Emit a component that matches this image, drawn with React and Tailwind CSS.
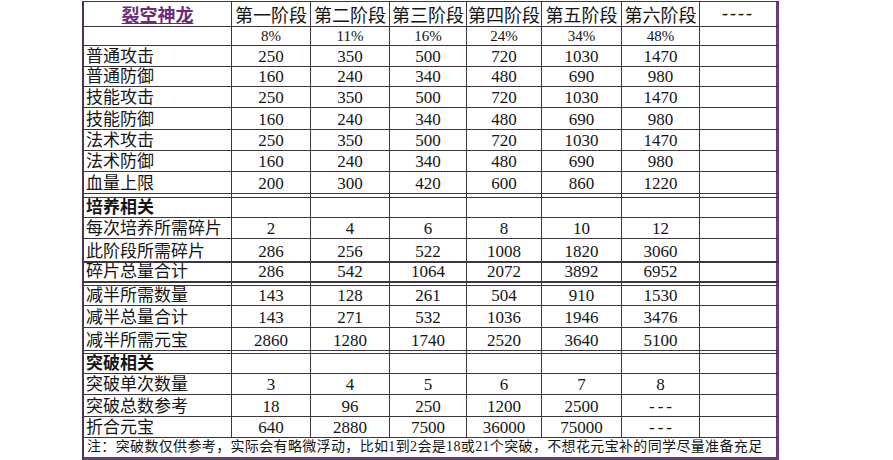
import React from "react";

const W = ["w-[148px]", "w-[79px]", "w-[79px]", "w-[77px]", "w-[75px]", "w-[80px]", "w-[78px]", "w-[79px]"];
const LINE = "border-[#3d3640]";

function Row({ cells, h, bottom = "border-b", kind = "data" }) {
  return (
    <div className={`flex ${h} ${bottom} ${LINE}`}>
      {W.map((w, i) => {
        const last = i === W.length - 1;
        const v = cells ? cells[i] : "";
        let inner = null;
        if (kind === "header" && i === 0) {
          inner = (
            <span className="text-[18px] leading-[20px] font-bold text-[#6b2c7a] underline decoration-[#6b2c7a] underline-offset-[1px]">
              {v}
            </span>
          );
        } else if (kind === "header") {
          inner = (
            <span className={`text-[18px] leading-[20px] ${last ? "tracking-[2px] text-[17px] pb-[3px]" : ""}`}>{v}</span>
          );
        } else if (kind === "section" && i === 0) {
          inner = <span className="text-[17px] leading-[19px] font-bold">{v}</span>;
        } else if (kind === "pct") {
          inner = <span className="text-[15px] leading-[17px]">{v}</span>;
        } else if (i === 0) {
          inner = <span className="text-[17px] leading-[19px]">{v}</span>;
        } else {
          inner = (
            <span className={`text-[17px] leading-[19px] ${v === "---" ? "tracking-[3px] pl-[3px]" : ""}`}>{v}</span>
          );
        }
        const align = i === 0 && kind !== "header" ? "justify-start pl-[2px]" : "justify-center";
        const br = last ? "border-r-[3px] border-r-[#6b3a7a]" : `border-r ${LINE}`;
        return (
          <div key={i} className={`${w} flex items-end ${align} ${br} overflow-hidden whitespace-nowrap`}>
            {inner}
          </div>
        );
      })}
    </div>
  );
}

export default function App() {
  return (
    <div className="w-[893px] h-[460px] bg-white text-[#151515] font-['Liberation_Serif','Noto_Sans_CJK_SC',serif]">
      <div className="pt-[1px]">
        <div className={`ml-[82px] inline-flex flex-col border-l-2 border-l-[#4b3552] border-t ${LINE}`}>
          <Row kind="header" h="h-[25px]" cells={["裂空神龙", "第一阶段", "第二阶段", "第三阶段", "第四阶段", "第五阶段", "第六阶段", "----"]} />
          <Row kind="pct" h="h-[19px]" cells={["", "8%", "11%", "16%", "24%", "34%", "48%", ""]} />
          <Row h="h-[21px]" cells={["普通攻击", "250", "350", "500", "720", "1030", "1470", ""]} />
          <Row h="h-[20px]" cells={["普通防御", "160", "240", "340", "480", "690", "980", ""]} />
          <Row h="h-[21px]" cells={["技能攻击", "250", "350", "500", "720", "1030", "1470", ""]} />
          <Row h="h-[22px]" cells={["技能防御", "160", "240", "340", "480", "690", "980", ""]} />
          <Row h="h-[21px]" cells={["法术攻击", "250", "350", "500", "720", "1030", "1470", ""]} />
          <Row h="h-[21px]" cells={["法术防御", "160", "240", "340", "480", "690", "980", ""]} />
          <Row h="h-[22px]" cells={["血量上限", "200", "300", "420", "600", "860", "1220", ""]} />
          <Row h="h-[4px]" />
          <Row kind="section" h="h-[20px]" cells={["培养相关", "", "", "", "", "", "", ""]} />
          <Row h="h-[21px]" cells={["每次培养所需碎片", "2", "4", "6", "8", "10", "12", ""]} />
          <Row h="h-[24px]" bottom="border-b-2" cells={["此阶段所需碎片", "286", "256", "522", "1008", "1820", "3060", ""]} />
          <Row h="h-[20px]" bottom="border-b-2" cells={["碎片总量合计", "286", "542", "1064", "2072", "3892", "6952", ""]} />
          <Row h="h-[3px]" />
          <Row h="h-[20px]" cells={["减半所需数量", "143", "128", "261", "504", "910", "1530", ""]} />
          <Row h="h-[22px]" cells={["减半总量合计", "143", "271", "532", "1036", "1946", "3476", ""]} />
          <Row h="h-[23px]" cells={["减半所需元宝", "2860", "1280", "1740", "2520", "3640", "5100", ""]} />
          <Row h="h-[3px]" />
          <Row kind="section" h="h-[20px]" cells={["突破相关", "", "", "", "", "", "", ""]} />
          <Row h="h-[21px]" cells={["突破单次数量", "3", "4", "5", "6", "7", "8", ""]} />
          <Row h="h-[22px]" cells={["突破总数参考", "18", "96", "250", "1200", "2500", "---", ""]} />
          <Row h="h-[21px]" cells={["折合元宝", "640", "2880", "7500", "36000", "75000", "---", ""]} />
          <div className="flex h-[22px] w-[695px] items-end pl-[3px] pb-[2px] border-r-[3px] border-r-[#6b3a7a] border-b-[3px] border-b-[#6b3a7a] whitespace-nowrap">
            <span className="text-[14px] leading-[16px] tracking-[0.35px]">
              注：突破数仅供参考，实际会有略微浮动，比如1到2会是18或21个突破，不想花元宝补的同学尽量准备充足
            </span>
          </div>
        </div>
      </div>
    </div>
  );
}
